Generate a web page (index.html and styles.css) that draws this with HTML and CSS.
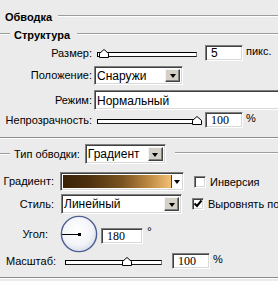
FILE: index.html
```html
<!DOCTYPE html>
<html lang="ru">
<head>
<meta charset="utf-8">
<link rel="stylesheet" href="styles.css">
</head>
<body>
<div class="panel">
  <div class="legend title"><span class="legend-text">Обводка</span><i class="rule"></i></div>
  <div class="legend sub"><i class="lead"></i><span class="legend-text">Структура</span><i class="rule"></i></div>

  <div class="row row-size">
    <span class="label w92">Размер:</span>
    <div class="slider s-size">
      <div class="track"></div>
      <svg class="thumb" style="left:2px" width="10" height="9" viewBox="0 0 10 9"><path d="M5 0.5 L9.5 4.5 L9.5 8.5 L0.5 8.5 L0.5 4.5 Z" fill="#fff" stroke="#000"/></svg>
    </div>
    <div class="field num sans">5</div>
    <span class="unit">пикс.</span>
  </div>

  <div class="row row-pos">
    <span class="label w92">Положение:</span>
    <div class="select s-pos"><span class="sel-text">Снаружи</span><span class="btn"><i class="tri"></i></span></div>
  </div>

  <div class="row row-mode">
    <span class="label w92">Режим:</span>
    <div class="select s-mode"><span class="sel-text">Нормальный</span></div>
  </div>

  <div class="row row-opac">
    <span class="label w92">Непрозрачность:</span>
    <div class="slider s-size">
      <div class="track"></div>
      <svg class="thumb" style="left:95px" width="10" height="9" viewBox="0 0 10 9"><path d="M5 0.5 L9.5 4.5 L9.5 8.5 L0.5 8.5 L0.5 4.5 Z" fill="#fff" stroke="#000"/></svg>
    </div>
    <div class="field num serif">100</div>
    <span class="unit">%</span>
  </div>

  <div class="sep"></div>

  <div class="row row-type">
    <i class="lead type-lead"></i>
    <span class="label type-label">Тип обводки:</span>
    <div class="select s-type"><span class="sel-text">Градиент</span><span class="btn"><i class="tri"></i></span></div>
    <i class="rule type-rule"></i>
  </div>

  <div class="row row-grad">
    <span class="label w53">Градиент:</span>
    <div class="gradbox"><span class="grad"></span><span class="gbtn"><i class="tri"></i></span></div>
    <span class="check"></span>
    <span class="check-label">Инверсия</span>
  </div>

  <div class="row row-style">
    <span class="label w53">Стиль:</span>
    <div class="select s-style"><span class="sel-text">Линейный</span><span class="btn"><i class="tri"></i></span></div>
    <span class="check checked"><svg width="10" height="10" viewBox="0 0 10 10"><path d="M1.5 4.5 L4 7 L8.5 1.5" fill="none" stroke="#000" stroke-width="2"/></svg></span>
    <span class="check-label">Выровнять по</span>
  </div>

  <div class="row row-angle">
    <span class="label w47">Угол:</span>
    <svg class="dial" width="38" height="38" viewBox="0 0 38 38">
      <defs>
        <radialGradient id="dg" cx="45%" cy="40%" r="60%">
          <stop offset="0" stop-color="#ffffff"/>
          <stop offset="0.7" stop-color="#f3f4f8"/>
          <stop offset="1" stop-color="#d9deea"/>
        </radialGradient>
      </defs>
      <circle cx="19" cy="19" r="17.6" fill="url(#dg)" stroke="#4f5f92" stroke-width="1.4"/>
      <line x1="2" y1="19.5" x2="19" y2="19.5" stroke="#000" stroke-width="1"/>
      <rect x="18" y="18" width="3" height="3" fill="#000"/>
    </svg>
    <div class="field num serif f-angle">180</div>
    <span class="deg">°</span>
  </div>

  <div class="row row-scale">
    <span class="label w55">Масштаб:</span>
    <div class="slider s-scale">
      <div class="track"></div>
      <svg class="thumb" style="left:57px" width="10" height="9" viewBox="0 0 10 9"><path d="M5 0.5 L9.5 4.5 L9.5 8.5 L0.5 8.5 L0.5 4.5 Z" fill="#fff" stroke="#000"/></svg>
    </div>
    <div class="field num serif f-scale">100</div>
    <span class="unit">%</span>
  </div>

  <div class="bottom"></div>
</div>
</body>
</html>
```
FILE: styles.css
```css
* { box-sizing: border-box; }
html, body {
  margin: 0;
  padding: 0;
  background: #ebebeb;
}
body {
  width: 278px;
  height: 281px;
  overflow: hidden;
  font-family: "Liberation Sans", Arial, sans-serif;
  font-size: 11px;
  color: #000;
}
.panel {
  display: flex;
  flex-direction: column;
  width: 278px;
}
.legend {
  display: flex;
  align-items: center;
  height: 12px;
}
.legend-text {
  font-weight: bold;
  font-size: 11px;
  line-height: 12px;
  white-space: nowrap;
}
.rule {
  display: block;
  flex: 1;
  height: 2px;
  border-top: 1px solid #9c9c9c;
  border-bottom: 1px solid #fff;
  margin-top: -2px;
}
.lead {
  display: block;
  width: 10px;
  height: 2px;
  border-top: 1px solid #9c9c9c;
  border-bottom: 1px solid #fff;
  margin-top: -2px;
  flex: none;
}
.title { margin-top: 11px; padding-left: 5px; }
.title .rule { margin-left: 6px; }
.sub { margin-top: 6px; }
.sub .legend-text { margin-left: 4px; }
.sub .rule { margin-left: 7px; }

.row {
  display: flex;
  align-items: center;
  white-space: nowrap;
}
.label {
  display: block;
  text-align: right;
  flex: none;
  line-height: 13px;
}
.w92 { width: 92px; }
.w53 { width: 54px; }
.w47 { width: 48px; }
.w55 { width: 56px; }

.row-size { margin-top: 4px; height: 16px; }
.row-pos { margin-top: 5px; height: 19px; }
.row-mode { margin-top: 5px; height: 20px; }
.row-opac { margin-top: 2px; height: 16px; }

.slider {
  position: relative;
  flex: none;
  height: 9px;
}
.s-size { width: 100px; margin-left: 5px; }
.s-scale { width: 97px; margin-left: 9px; }
.track {
  position: absolute;
  left: 0; right: 0;
  top: 3px;
  height: 5px;
  background: #fff;
  border: 1px solid #000;
  border-right-color: #7a7a7a;
  border-bottom-color: #1a1a1a;
}
.thumb {
  position: absolute;
  top: 0;
}

.field {
  flex: none;
  height: 16px;
  width: 38px;
  background: #fff;
  border: 1px solid;
  border-color: #7f7f7f #fff #fff #7f7f7f;
  box-shadow: inset 1px 1px 0 #404040, inset -1px -1px 0 #d8d8d8;
  padding-left: 5px;
  line-height: 14px;
}
.s-size + .field { margin-left: 8px; }
.sans { font-family: "Liberation Sans", Arial, sans-serif; font-size: 12px; }
.serif { font-family: "Liberation Serif", "Times New Roman", serif; font-size: 12px; }
.unit { margin-left: 3px; margin-top: -4px; }

.select {
  flex: none;
  display: flex;
  align-items: stretch;
  background: #fff;
  border: 1px solid;
  border-color: #7f7f7f #fff #fff #7f7f7f;
  box-shadow: inset 1px 1px 0 #404040, inset -1px -1px 0 #d8d8d8;
  padding: 2px;
  height: 100%;
}
.sel-text {
  flex: 1;
  font-size: 12px;
  line-height: 14px;
}
.btn {
  flex: none;
  width: 15px;
  background: #d4d0c8;
  border: 1px solid;
  border-color: #f4f4f4 #404040 #404040 #f4f4f4;
  box-shadow: inset -1px -1px 0 #808080;
  display: flex;
  align-items: center;
  justify-content: center;
}
.tri {
  display: block;
  width: 0; height: 0;
  border-left: 3.5px solid transparent;
  border-right: 3.5px solid transparent;
  border-top: 4px solid #000;
  margin-top: 1px;
}
.s-pos { width: 89px; margin-left: 2px; }
.s-mode {
  width: 184px;
  margin-left: 2px;
  padding: 3px 2px 1px;
  border-right: none;
  box-shadow: inset 1px 1px 0 #404040, inset 0 -1px 0 #d8d8d8;
}

.sep {
  margin-top: 9px;
  height: 2px;
  border-top: 1px solid #8c8c8c;
  border-bottom: 1px solid #fff;
}

.row-type { margin-top: 5px; height: 20px; }
.type-lead { margin-top: 0; }
.type-label { margin-left: 4px; }
.s-type { width: 81px; margin-left: 5px; }
.type-rule { margin-left: 9px; margin-top: -2px; }

.row-grad { margin-top: 8px; height: 19px; }
.gradbox {
  flex: none;
  display: flex;
  width: 124px;
  height: 19px;
  margin-left: 6px;
  background: #fff;
  border: 1px solid;
  border-color: #7f7f7f #fff #fff #7f7f7f;
  box-shadow: inset 1px 1px 0 #404040, inset -1px -1px 0 #d8d8d8;
  padding: 2px 1px 2px 2px;
}
.grad {
  flex: 1;
  background: linear-gradient(to right, #3a2207 0%, #4f320e 25%, #7a5320 55%, #b98640 78%, #f3bf74 100%);
}
.gbtn {
  flex: none;
  width: 11px;
  border-left: 1px solid #404040;
  display: flex;
  align-items: center;
  justify-content: center;
}
.check {
  flex: none;
  display: flex;
  align-items: center;
  justify-content: center;
  width: 12px;
  height: 12px;
  background: #fff;
  border: 1px solid;
  border-color: #7f7f7f #fff #fff #7f7f7f;
  box-shadow: inset 1px 1px 0 #404040, inset -1px -1px 0 #d8d8d8;
  margin-left: 10px;
}
.check-label { margin-left: 4px; font-size: 11px; }

.row-style { margin-top: 3px; height: 20px; }
.s-style { width: 121px; margin-left: 7px; }
.row-style .check { margin-left: 10px; }

.row-angle { margin-top: 1px; height: 38px; }
.dial { flex: none; margin-left: 12px; }
.f-angle { margin-left: 3px; width: 42px; height: 16px; margin-top: 4px; }
.deg { margin-left: 4px; margin-top: -4px; font-size: 12px; }

.row-scale { margin-top: 0; height: 16px; }
.f-scale { margin-left: 10px; width: 38px; }

.bottom {
  margin-top: 8px;
  height: 2px;
  border-top: 1px solid #8c8c8c;
  border-bottom: 1px solid #fff;
}
```
